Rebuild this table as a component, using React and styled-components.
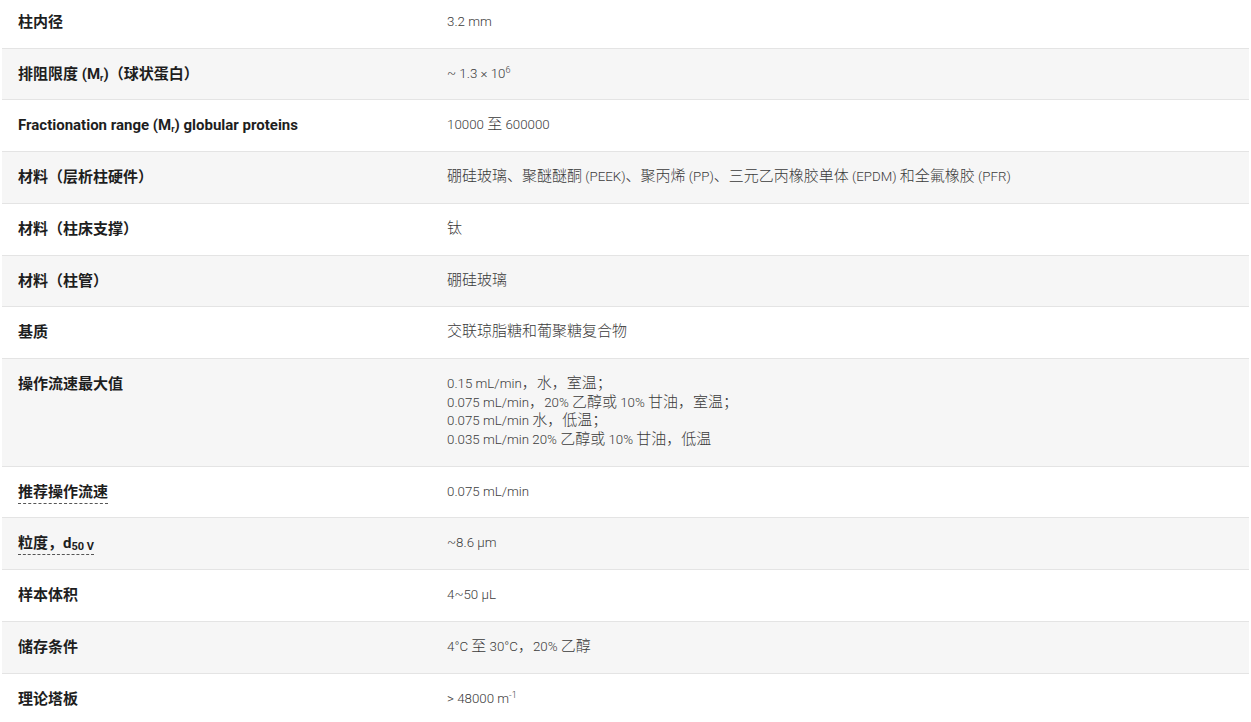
import React from 'react';
import styled, { createGlobalStyle } from 'styled-components';

const GlobalStyle = createGlobalStyle`
  body {
    margin: 0;
    background: #fff;
    font-family: Roboto, "Noto Sans CJK SC", sans-serif;
  }
`;

const Table = styled.div`
  margin: -3px 2px 0;
  display: flex;
  flex-direction: column;
`;

const Row = styled.div`
  display: grid;
  grid-template-columns: 429px 1fr;
  padding: 16px 16px;
  background: ${(p) => (p.$shade ? '#f6f6f6' : '#fff')};
  border-bottom: 1px solid #e4e4e4;
  line-height: 18.7px;
`;

const Label = styled.div`
  font-size: 15px;
  font-weight: 700;
  color: #1e1e1e;
`;

const Hint = styled.span`
  border-bottom: 1px dashed #555;
  padding-bottom: 2px;
`;

const Value = styled.div`
  font-size: 13.3px;
  font-weight: 300;
  color: #3c3c3c;
`;

const Han = styled.span`
  font-size: 15px;
  font-weight: 300;
  line-height: 0;
  color: #3a3a3a;
`;

const Sub = styled.sub`
  font-size: ${(p) => p.$size || 9}px;
  vertical-align: -2px;
  line-height: 0;
`;

const Sup = styled.sup`
  font-size: 9px;
  vertical-align: 5px;
  line-height: 0;
`;

// wrap runs of CJK characters so they render at the larger size seen in the reference
const han = (text) =>
  text.split(/([\u3000-\u303f\u4e00-\u9fff\uff00-\uffef]+)/).map((part, i) =>
    i % 2 === 1 ? <Han key={i}>{part}</Han> : part
  );

const rows = [
  ['柱内径', '3.2 mm'],
  [<>排阻限度 (M<Sub>r</Sub>)（球状蛋白）</>, <>~ 1.3 × 10<Sup>6</Sup></>],
  [<>Fractionation range (M<Sub>r</Sub>) globular proteins</>, han('10000 至 600000')],
  ['材料（层析柱硬件）', han('硼硅玻璃、聚醚醚酮 (PEEK)、聚丙烯 (PP)、三元乙丙橡胶单体 (EPDM) 和全氟橡胶 (PFR)')],
  ['材料（柱床支撑）', han('钛')],
  ['材料（柱管）', han('硼硅玻璃')],
  ['基质', han('交联琼脂糖和葡聚糖复合物')],
  [
    '操作流速最大值',
    <>
      {han('0.15 mL/min，水，室温；')}<br />
      {han('0.075 mL/min，20% 乙醇或 10% 甘油，室温；')}<br />
      {han('0.075 mL/min 水，低温；')}<br />
      {han('0.035 mL/min 20% 乙醇或 10% 甘油，低温')}
    </>,
  ],
  [<Hint>推荐操作流速</Hint>, '0.075 mL/min'],
  [<Hint>粒度，d<Sub $size={11}>50 V</Sub></Hint>, '~8.6 µm'],
  ['样本体积', '4~50 µL'],
  ['储存条件', han('4°C 至 30°C，20% 乙醇')],
  ['理论塔板', <>&gt; 48000 m<Sup>-1</Sup></>],
];

export default function App() {
  return (
    <>
      <GlobalStyle />
      <Table>
        {rows.map(([label, value], i) => (
          <Row key={i} $shade={i % 2 === 1}>
            <Label>{label}</Label>
            <Value>{value}</Value>
          </Row>
        ))}
      </Table>
    </>
  );
}
